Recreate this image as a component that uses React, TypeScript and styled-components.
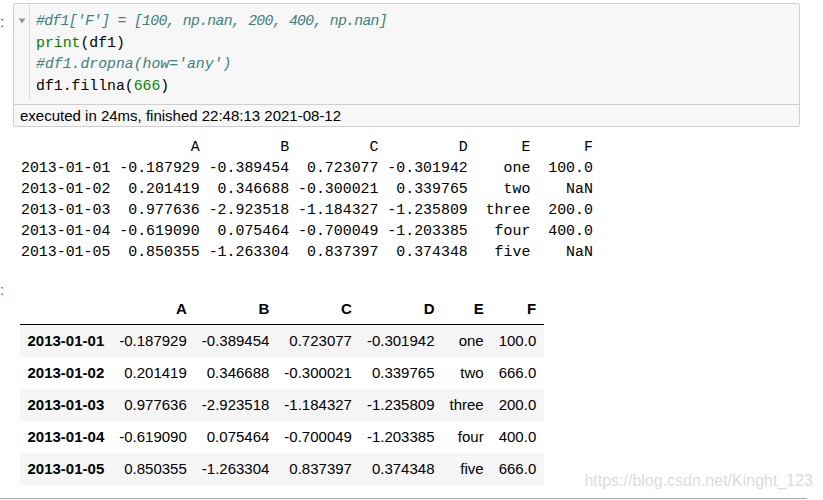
import React from "react";
import styled, { createGlobalStyle } from "styled-components";

const GlobalStyle = createGlobalStyle`
  html, body { margin: 0; padding: 0; background: #ffffff; }
  body { font-family: "Liberation Sans", Arial, sans-serif; }
`;

const Notebook = styled.div`
  position: relative;
  width: 823px;
  height: 500px;
  overflow: hidden;
  background: #ffffff;
`;

const CellRow = styled.div<{ $top?: number }>`
  display: flex;
  align-items: flex-start;
  margin-top: ${(p) => p.$top ?? 0}px;
`;

const Prompt = styled.div<{ $color: string; $pad: number }>`
  width: 13px;
  flex: 0 0 13px;
  padding-top: ${(p) => p.$pad}px;
  font-family: "Liberation Sans", Arial, sans-serif;
  font-size: 15px;
  line-height: 15px;
  color: ${(p) => p.$color};
  box-sizing: border-box;
`;

const InputBox = styled.div`
  width: 787px;
  box-sizing: border-box;
  border: 1px solid #cfcfcf;
  border-radius: 2px;
  background: #f7f7f7;
`;

const CodeArea = styled.div`
  display: flex;
  height: 100px;
`;

const Gutter = styled.div`
  width: 16px;
  flex: 0 0 16px;
  margin-top: 1px;
  margin-bottom: 4px;
  border-right: 1px solid #dddddd;
  display: flex;
  justify-content: center;
  padding-top: 13px;
  box-sizing: border-box;
`;

const Code = styled.div`
  padding: 7px 0 7px 6px;
  font-family: "Liberation Mono", "Courier New", monospace;
  font-size: 14.8px;
  line-height: 21.5px;
  color: #000000;
  white-space: pre;
`;

const CodeLine = styled.div<{ $tight?: boolean }>`
  letter-spacing: ${(p) => (p.$tight ? "-0.72px" : "0")};
`;

const Comment = styled.span`
  color: #408080;
  font-style: italic;
`;

const Builtin = styled.span`
  color: #008000;
`;

const NumberLit = styled.span`
  color: #008800;
`;

const ExecBar = styled.div`
  border-top: 1px solid #cfcfcf;
  height: 21px;
  padding-left: 6px;
  font-family: "Liberation Sans", Arial, sans-serif;
  font-size: 15px;
  line-height: 21px;
  color: #000000;
`;

const PrintOut = styled.pre`
  margin: 10px 0 0 0;
  padding-left: 21px;
  font-family: "Liberation Mono", "Courier New", monospace;
  font-size: 14.9px;
  line-height: 21.1px;
  color: #000000;
`;

const TableWrap = styled.div`
  padding-left: 7px;
  padding-top: 13px;
`;

const Frame = styled.table`
  border-collapse: collapse;
  border-spacing: 0;
  font-family: "Liberation Sans", Arial, sans-serif;
  font-size: 15px;
  color: #000000;
`;

const HeadCell = styled.th`
  height: 32px;
  padding: 0 7.5px;
  text-align: right;
  font-weight: bold;
  border-bottom: 1px solid #000000;
  box-sizing: border-box;
`;

const BodyRow = styled.tr<{ $striped: boolean }>`
  background: ${(p) => (p.$striped ? "#f5f5f5" : "#ffffff")};
  height: 32px;
`;

const IndexCell = styled.th`
  padding: 0 7.5px;
  text-align: left;
  font-weight: bold;
`;

const ValueCell = styled.td`
  padding: 0 7.5px;
  text-align: right;
`;

const BottomRule = styled.div`
  margin-top: 13px;
  width: 807px;
  height: 1px;
  background: #a9a9a9;
`;

const Watermark = styled.div`
  position: absolute;
  right: 10px;
  top: 472px;
  font-family: "Liberation Sans", Arial, sans-serif;
  font-size: 16px;
  color: #dcdcdc;
`;

const columns = ["A", "B", "C", "D", "E", "F"];

const rows: [string, string[]][] = [
  ["2013-01-01", ["-0.187929", "-0.389454", "0.723077", "-0.301942", "one", "100.0"]],
  ["2013-01-02", ["0.201419", "0.346688", "-0.300021", "0.339765", "two", "666.0"]],
  ["2013-01-03", ["0.977636", "-2.923518", "-1.184327", "-1.235809", "three", "200.0"]],
  ["2013-01-04", ["-0.619090", "0.075464", "-0.700049", "-1.203385", "four", "400.0"]],
  ["2013-01-05", ["0.850355", "-1.263304", "0.837397", "0.374348", "five", "666.0"]],
];

const printed = [
  "                   A         B         C         D      E      F",
  "2013-01-01 -0.187929 -0.389454  0.723077 -0.301942    one  100.0",
  "2013-01-02  0.201419  0.346688 -0.300021  0.339765    two    NaN",
  "2013-01-03  0.977636 -2.923518 -1.184327 -1.235809  three  200.0",
  "2013-01-04 -0.619090  0.075464 -0.700049 -1.203385   four  400.0",
  "2013-01-05  0.850355 -1.263304  0.837397  0.374348   five    NaN",
].join("\n");

const CollapseIcon = () => (
  <svg width="8" height="6" viewBox="0 0 8 6">
    <path d="M0.5 0.5 L7.5 0.5 L4 5.5 Z" fill="#9a9a9a" />
  </svg>
);

export default function App() {
  return (
    <>
      <GlobalStyle />
      <Notebook>
        <CellRow $top={3}>
          <Prompt $color="#303f9f" $pad={11}>:</Prompt>
          <InputBox>
            <CodeArea>
              <Gutter>
                <CollapseIcon />
              </Gutter>
              <Code>
                <CodeLine $tight>
                  <Comment>#df1['F'] = [100, np.nan, 200, 400, np.nan]</Comment>
                </CodeLine>
                <CodeLine>
                  <Builtin>print</Builtin>(df1)
                </CodeLine>
                <CodeLine>
                  <Comment>#df1.dropna(how='any')</Comment>
                </CodeLine>
                <CodeLine>
                  df1.fillna(<NumberLit>666</NumberLit>)
                </CodeLine>
              </Code>
            </CodeArea>
            <ExecBar>executed in 24ms, finished 22:48:13 2021-08-12</ExecBar>
          </InputBox>
        </CellRow>

        <PrintOut>{printed}</PrintOut>

        <CellRow $top={16}>
          <Prompt $color="#d84315" $pad={2}>:</Prompt>
          <TableWrap>
            <Frame>
              <thead>
                <tr>
                  <HeadCell />
                  {columns.map((c) => (
                    <HeadCell key={c}>{c}</HeadCell>
                  ))}
                </tr>
              </thead>
              <tbody>
                {rows.map(([idx, vals], i) => (
                  <BodyRow key={idx} $striped={i % 2 === 0}>
                    <IndexCell>{idx}</IndexCell>
                    {vals.map((v, j) => (
                      <ValueCell key={j}>{v}</ValueCell>
                    ))}
                  </BodyRow>
                ))}
              </tbody>
            </Frame>
          </TableWrap>
        </CellRow>

        <BottomRule />
        <Watermark>https://blog.csdn.net/Kinght_123</Watermark>
      </Notebook>
    </>
  );
}
